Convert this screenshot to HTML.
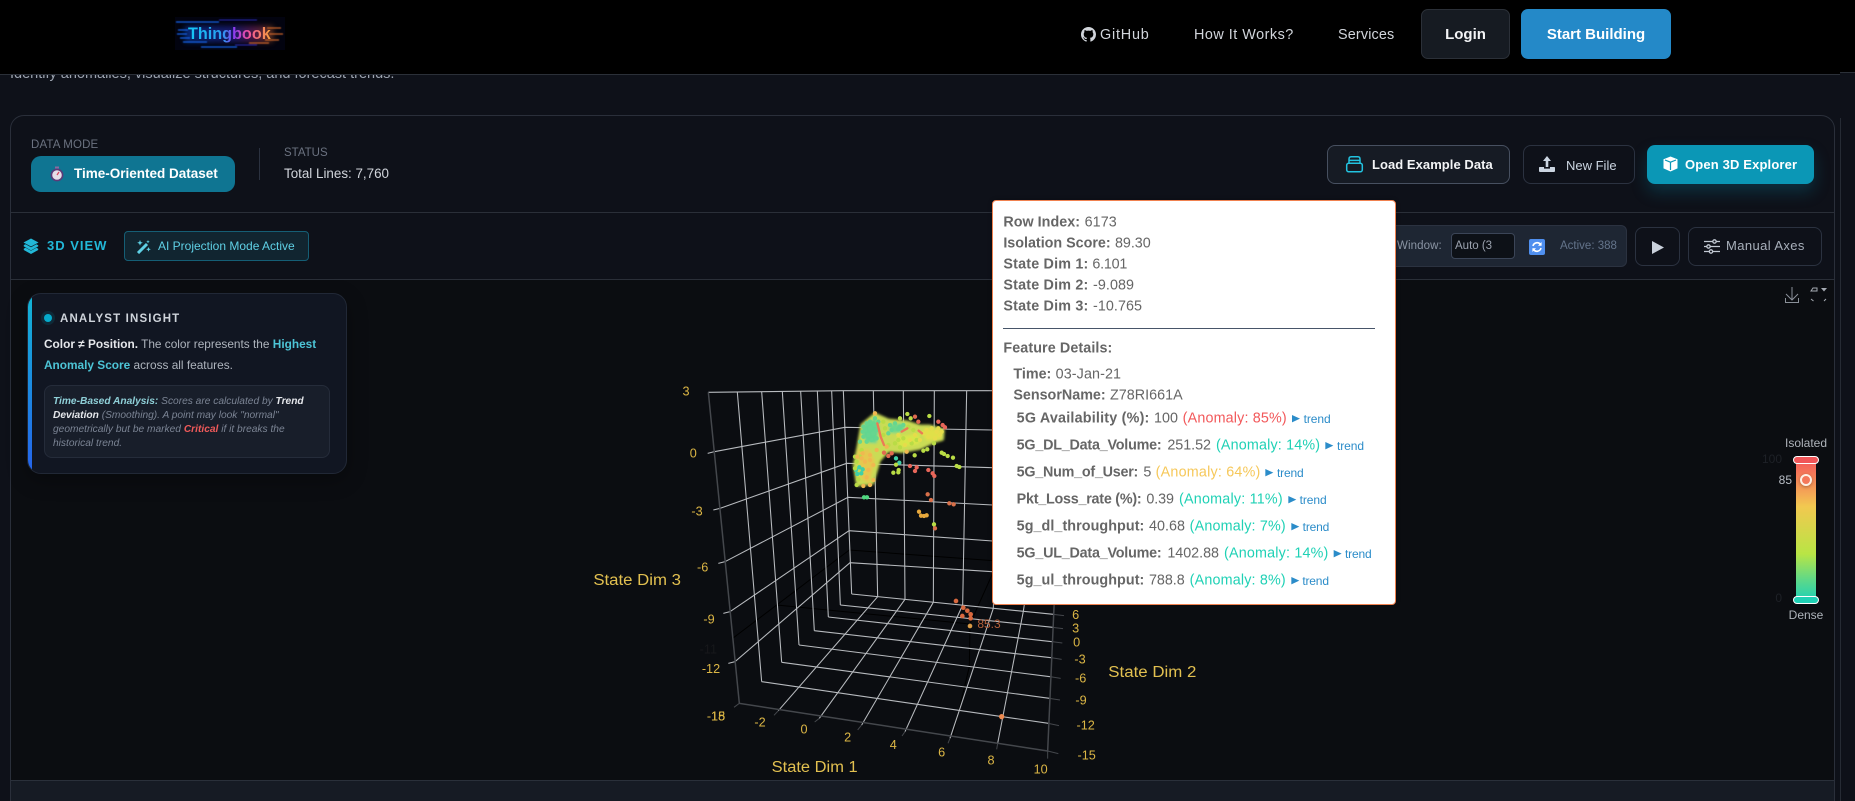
<!DOCTYPE html>
<html lang="en"><head><meta charset="utf-8"><title>Thingbook</title>
<style>
*{box-sizing:border-box;margin:0;padding:0}
html,body{width:1855px;height:801px;overflow:hidden;background:#0e1119;font-family:"Liberation Sans",sans-serif}
#w{position:relative;width:1855px;height:801px;overflow:hidden;background:#0e1119}
.a{position:absolute}
.t{position:absolute;white-space:nowrap;line-height:20px;height:20px}
b{font-weight:700}
.tip{position:absolute;left:992px;top:200px;width:404px;height:405px;background:#fff;border:1px solid #f0814f;border-radius:4px;box-shadow:0 0 4px rgba(0,0,0,.3)}
.btn{position:absolute;border-radius:8px}
</style></head><body><div id="w">

<div class="t" style="left:10px;top:64px;font-size:14.5px;color:#9ca3af">Identify anomalies, visualize structures, and forecast trends.</div>

<!-- main card -->
<div class="a" style="left:10px;top:115px;width:1825px;height:720px;background:#0e1119;border:1px solid #2a2f3a;border-radius:14px"></div>
<div class="a" style="left:11px;top:212px;width:1823px;height:1px;background:#2a2f38"></div>
<div class="a" style="left:11px;top:279px;width:1823px;height:1px;background:#2a2f38"></div>
<div class="a" style="left:11px;top:280px;width:1823px;height:500px;background:#0b0d11"></div>
<div class="a" style="left:11px;top:780px;width:1823px;height:21px;background:#161b24;border-top:1px solid #2a303a"></div>
<div class="a" style="left:1840px;top:118px;width:1px;height:683px;background:#262b34"></div>

<!-- top section -->
<div class="t" style="left:31px;top:135px;font-size:11.5px;letter-spacing:.15px;color:#6b7280">DATA MODE</div>
<div class="btn" style="left:31px;top:156px;width:204px;height:36px;background:#0f7592;border-radius:10px"></div>
<svg class="a" style="left:50px;top:166px" width="14" height="16" viewBox="0 0 14 16"><rect x="5" y="0.5" width="4" height="2" fill="#8a6aa0"/><circle cx="7" cy="9" r="5.6" fill="#e6dfe8" stroke="#5b3a78" stroke-width="1.6"/><path d="M7 9L9 6" stroke="#d8405a" stroke-width="1.2"/></svg>
<div class="t" style="left:74px;top:164px;font-size:13.5px;font-weight:700;color:#fff">Time-Oriented Dataset</div>
<div class="a" style="left:259px;top:148px;width:1px;height:32px;background:#2b3240"></div>
<div class="t" style="left:284px;top:143px;font-size:11.5px;color:#6b7280">STATUS</div>
<div class="t" style="left:284px;top:164px;font-size:13.4px;color:#d1d5db">Total Lines: 7,760</div>

<div class="btn" style="left:1327px;top:145px;width:183px;height:39px;background:#161b24;border:1px solid #475060"></div>
<svg class="a" style="left:1345px;top:155px" width="19" height="18" viewBox="0 0 19 18" fill="none" stroke="#22c3e0" stroke-width="1.5"><rect x="1.7" y="8.2" width="15.6" height="8.6" rx="2"/><path d="M4 8V4.2Q4 1.8 6.2 1.8H12.8Q15 1.8 15 4.2V8M4 5.4H15"/></svg>
<div class="t" style="left:1372px;top:155px;font-size:13px;font-weight:700;letter-spacing:.05px;color:#f3f4f6">Load Example Data</div>
<div class="btn" style="left:1523px;top:145px;width:112px;height:39px;background:#0e1119;border:1px solid #2b3240"></div>
<svg class="a" style="left:1539px;top:156px" width="16" height="16" viewBox="0 0 16 16" fill="#cbd5e1"><path d="M8 0L12 5H9.3V11H6.7V5H4Z"/><path d="M0.5 11H5V12.6H11V11H15.5Q16 11 16 12V15Q16 16 15 16H1Q0 16 0 15V12Q0 11 .5 11Z"/></svg>
<div class="t" style="left:1566px;top:156px;font-size:13px;color:#cbd5e1">New File</div>
<div class="btn" style="left:1647px;top:145px;width:167px;height:39px;background:#0b97b6;box-shadow:0 8px 16px rgba(8,145,178,.25)"></div>
<svg class="a" style="left:1663px;top:156px" width="15" height="16" viewBox="0 0 15 16"><path d="M7.5 0.5L14.5 3.2V12.4L7.5 15.5L.5 12.4V3.2Z" fill="#fff"/><path d="M2 4L7.5 6.2L13 4M7.5 6.2V14" stroke="#0b97b6" stroke-width="1.2" fill="none"/></svg>
<div class="t" style="left:1685px;top:155px;font-size:13px;font-weight:700;letter-spacing:.15px;color:#fff">Open 3D Explorer</div>

<!-- view row -->
<svg class="a" style="left:23px;top:238px" width="16" height="16" viewBox="0 0 16 16" fill="#22b8d8"><path d="M8 .5L15.5 4.5L8 8.5L.5 4.5Z"/><path d="M.8 7L2.6 6.2L8 9.2L13.4 6.2L15.2 7.2V8.4L8 12.4L.8 8.4Z"/><path d="M.8 10.6L2.6 9.8L8 12.8L13.4 9.8L15.2 10.8V12L8 16L.8 12Z"/></svg>
<div class="t" style="left:47px;top:236px;font-size:13px;font-weight:700;letter-spacing:1px;color:#22b8d8">3D VIEW</div>
<div class="a" style="left:124px;top:231px;width:185px;height:30px;background:#112530;border:1px solid #155e75;border-radius:4px"></div>
<svg class="a" style="left:136px;top:240px" width="15" height="14" viewBox="0 0 15 14" fill="#5fd0e5"><path d="M2 13L11 4" stroke="#5fd0e5" stroke-width="3"/><path d="M4 0l.8 2 2 .8-2 .8L4 5.6l-.8-2-2-.8 2-.8zM12.5 7l.7 1.6 1.6.7-1.6.7-.7 1.6-.7-1.6-1.6-.7 1.6-.7zM12 0l.5 1.2 1.2.5-1.2.5L12 3.4l-.5-1.2-1.2-.5 1.2-.5z"/></svg>
<div class="t" style="left:158px;top:236px;font-size:12px;color:#5fd0e5">AI Projection Mode Active</div>

<div class="a" style="left:1300px;top:225px;width:327px;height:42px;background:#1e2633;border:1px solid #2b3240;border-radius:6px"></div>
<div class="t" style="left:1397px;top:236px;font-size:11.5px;letter-spacing:.1px;color:#8a94a3">Window:</div>
<div class="a" style="left:1451px;top:233px;width:64px;height:26px;background:#0d1117;border:1px solid #3b4557;border-radius:4px"></div>
<div class="t" style="left:1455px;top:236px;font-size:11.5px;color:#9ca3af">Auto (3</div>
<svg class="a" style="left:1529px;top:239px" width="16" height="16" viewBox="0 0 16 16"><rect width="16" height="16" rx="2" fill="#4f8fef"/><path d="M4 7A4.2 4.2 0 0 1 11.5 5.5M12 9A4.2 4.2 0 0 1 4.5 10.5" fill="none" stroke="#fff" stroke-width="1.6"/><path d="M12.6 3V6.8H9zM3.4 13V9.2H7z" fill="#fff"/></svg>
<div class="t" style="left:1560px;top:236px;font-size:11.5px;color:#64748b">Active: 388</div>
<div class="btn" style="left:1635px;top:227px;width:45px;height:39px;background:#0e1119;border:1px solid #2b3240"></div>
<svg class="a" style="left:1652px;top:241px" width="12" height="13" viewBox="0 0 12 13"><path d="M0 0L12 6.5L0 13Z" fill="#c9d1db"/></svg>
<div class="btn" style="left:1688px;top:227px;width:134px;height:39px;background:#0e1119;border:1px solid #2b3240"></div>
<svg class="a" style="left:1704px;top:239px" width="16" height="15" viewBox="0 0 16 15" fill="#0e1119" stroke="#c2c9d3" stroke-width="1.3"><path d="M0 2.5H16M0 7.5H16M0 12.5H16"/><circle cx="10.5" cy="2.5" r="1.7"/><circle cx="4.5" cy="7.5" r="1.7"/><circle cx="7" cy="12.5" r="1.7"/></svg>
<div class="t" style="left:1726px;top:236px;font-size:13px;letter-spacing:.4px;color:#a8b0bb">Manual Axes</div>

<!-- insight card -->
<div class="a" style="left:27px;top:293px;width:320px;height:181px;background:#111622;border:1px solid #212836;border-radius:14px;overflow:hidden;box-shadow:0 6px 20px rgba(0,0,0,.3)"><div style="position:absolute;left:0;top:0;width:4px;height:100%;background:linear-gradient(#12b5d4,#2563eb)"></div></div>
<div class="a" style="left:44px;top:314px;width:8px;height:8px;border-radius:50%;background:#06aacb;box-shadow:0 0 0 3px rgba(6,170,203,.13)"></div>
<div class="t" style="left:60px;top:309px;font-size:11.5px;font-weight:700;letter-spacing:1.15px;color:#cfd4db">ANALYST INSIGHT</div>
<div class="t" style="left:44px;top:334px;font-size:11.85px;color:#aeb4bd"><b style="color:#e5e7eb">Color ≠ Position.</b> The color represents the <b style="color:#4dc4d6">Highest</b></div>
<div class="t" style="left:44px;top:355px;font-size:11.85px;color:#aeb4bd"><b style="color:#4dc4d6">Anomaly Score</b> across all features.</div>
<div class="a" style="left:44px;top:385px;width:286px;height:73px;background:#181e2a;border:1px solid #252c3a;border-radius:8px"></div>
<div class="t" style="left:53px;top:392px;font-size:10.2px;font-style:italic;color:#7b8494"><b style="color:#8fd0d8">Time-Based Analysis:</b> Scores are calculated by <b style="color:#e5e7eb">Trend</b></div>
<div class="t" style="left:53px;top:406px;font-size:10.2px;font-style:italic;color:#7b8494"><b style="color:#e5e7eb">Deviation</b> (Smoothing). A point may look "normal"</div>
<div class="t" style="left:53px;top:420px;font-size:10.2px;font-style:italic;color:#7b8494">geometrically but be marked <b style="color:#ef5a5a">Critical</b> if it breaks the</div>
<div class="t" style="left:53px;top:434px;font-size:10.2px;font-style:italic;color:#7b8494">historical trend.</div>

<!-- chart -->
<svg class="a" style="left:0;top:0" width="1855" height="801" viewBox="0 0 1855 801">
<defs><filter id="soft" x="-20%" y="-20%" width="140%" height="140%"><feGaussianBlur stdDeviation="4"/></filter><filter id="dot"><feGaussianBlur stdDeviation="1.2"/></filter></defs>
<g transform="translate(580 370) scale(.33333)" fill="none" font-family="Liberation Sans, sans-serif">
<g stroke="#000" stroke-width="3"><path d="M458 805L808 540L1238 572M590 705L1170 762L1168 890L1118 1100M1238 610L1170 762"/></g>
<g stroke="#b8bbbf" stroke-width="3.2">
<path d="M385 67L790 62L1238 62"/>
<path d="M472 67L545 935M545 65L605 877M607 65L657 825M662 64L703 782M712 63L745 741M755 63L781 705M790 62L815 672"/>
<path d="M383 250L403 245L795 172L1238 180M400 420L420 415L800 280L1238 293M415 580L435 575L804 382L1238 405M430 730L450 725L807 482L1238 513M445 880L465 875L810 578L1238 605"/>
<path d="M880 62L893 680M970 62L975 688M1063 62L1060 697M1160 62L1148 705M1262 62L1240 715M1335 690L1330 724"/>
<path d="M815 672L1420 733M781 705L1418 772M745 741L1416 815M703 782L1413 863M657 825L1410 920M605 877L1408 985M545 935L1405 1060"/>
<path d="M595 1022L893 680M718 1045L975 688M845 1065L1060 697M975 1085L1148 705M1110 1105L1240 715M1253 1120L1330 724"/>
</g>
<g stroke="#44474c" stroke-width="4.5"><path d="M385 67L478 1000L1403 1143L1423 690"/></g>
<g stroke="#44474c" stroke-width="3"><path d="M478 1000L462 1012M595 1022L582 1036M718 1045L704 1056M845 1065L833 1080M975 1085L966 1098M1110 1105L1104 1120M1253 1120L1250 1138M1403 1143L1403 1166M1403 1143L1435 1151M1405 1060L1437 1067M1408 985L1440 990M1410 920L1442 925M1413 863L1445 868M1416 815L1447 819M1418 772L1449 776M1420 733L1452 737"/></g>
<g font-size="38" fill="#dcb645" text-anchor="middle" dominant-baseline="central">
<text x="318" y="65">3</text><text x="340" y="250">0</text><text x="351" y="425">-3</text><text x="368" y="592">-6</text><text x="387" y="748">-9</text><text x="385" y="838" fill="#17181b">-11</text><text x="393" y="897">-12</text><text x="408" y="1040">-15</text><text x="408" y="1040">-18</text>
<text x="540" y="1058">-2</text><text x="672" y="1078">0</text><text x="803" y="1102">2</text><text x="940" y="1125">4</text><text x="1085" y="1148">6</text><text x="1233" y="1172">8</text><text x="1382" y="1199">10</text>
<text x="1487" y="735">6</text><text x="1487" y="775">3</text><text x="1490" y="818">0</text><text x="1500" y="868">-3</text><text x="1502" y="925">-6</text><text x="1503" y="991">-9</text><text x="1517" y="1067">-12</text><text x="1520" y="1157">-15</text>
</g>
<g font-size="46" fill="#e2c050" dominant-baseline="central">
<text x="40" y="632" textLength="263" lengthAdjust="spacingAndGlyphs">State Dim 3</text>
<text x="575" y="1192" textLength="258" lengthAdjust="spacingAndGlyphs">State Dim 1</text>
<text x="1585" y="907" textLength="264" lengthAdjust="spacingAndGlyphs">State Dim 2</text>
</g>
<text x="1192" y="762" font-size="36" fill="#b5603a" dominant-baseline="central">85.3</text>
<g stroke-linecap="round" stroke-width="14">
<path stroke="#d9693f" d="M1128 693h0M1150 713h0M1162 722h0M1172 733h0M1147 738h0M1172 745h0"/>
<path stroke="#d99a45" d="M1170 768h0"/>
<path stroke="#ee8a50" stroke-width="16" d="M1265 1040h0"/>
</g>
</g>
<g transform="translate(820 390) scale(.33333)" stroke-linecap="round" stroke-linejoin="round" fill="none">
<g filter="url(#soft)">
<path fill="#c9dc55" stroke="#c9dc55" stroke-width="8" d="M125 105L165 72L205 90L260 95L300 108L330 108L370 120L368 148L340 156L300 175L245 185L205 182L178 212L158 280L112 285L103 225L114 170Z"/>
<path fill="#62d690" d="M130 105L165 85L178 110L170 160L140 158L127 135Z"/>
<path fill="#6cd88c" d="M208 102L252 100L255 122L225 130L208 128Z"/>
<path fill="#e0e04a" d="M312 115L362 120L364 148L320 152L308 135Z"/>
<path fill="#d8e64a" d="M228 142L298 130L298 162L240 172Z"/>
<path fill="#e6c850" d="M112 178L148 178L165 212L148 280L125 268Z"/>
</g>
<g stroke-width="13">
<path stroke="#66d690" d="M130 110h0M140 100h0M150 95h0M165 85h0M128 125h0M135 120h0M150 115h0M165 105h0M175 95h0M130 140h0M145 135h0M160 130h0M170 120h0M140 155h0M155 150h0M170 145h0M120 155h0M210 105h0M225 100h0M240 110h0M215 120h0M235 118h0M250 105h0M205 130h0"/>
<path stroke="#40d0a8" d="M108 240h0M118 232h0M128 238h0M112 252h0M124 250h0M228 205h0M238 218h0"/>
<path stroke="#b9dc45" d="M105 200h0M110 215h0M105 235h0M120 200h0M125 180h0M115 268h0M110 285h0M190 95h0M195 115h0M190 135h0M265 110h0M280 120h0M250 145h0M235 150h0M225 160h0M275 160h0M290 150h0M205 165h0M240 172h0M328 78h0M262 72h0M310 182h0M322 178h0M342 160h0M365 188h0M372 192h0M383 198h0M399 203h0M410 228h0M418 231h0M284 196h0M228 224h0M236 240h0M220 248h0M235 247h0M342 403h0M240 85h0M272 85h0"/>
<path stroke="#e6dc4a" d="M320 120h0M335 115h0M350 125h0M360 135h0M345 145h0M325 140h0M310 130h0M300 150h0M285 135h0M270 150h0M255 165h0M235 135h0M365 125h0M355 115h0"/>
<path stroke="#f0b850" d="M165 70h0M130 288h0M150 285h0M160 270h0M140 262h0M145 240h0M160 225h0M112 200h0M128 190h0M150 195h0M170 180h0M200 170h0M260 185h0M135 215h0M150 210h0M125 205h0"/>
<path stroke="#ec7a55" stroke-width="7" d="M172 100L182 140L192 165M245 125L262 115M296 122L306 130"/>
<path stroke="#e8665a" d="M355 95h0M368 105h0M375 112h0M270 228h0M290 232h0M285 243h0M325 240h0M338 250h0M343 258h0"/>
<path stroke="#e06a50" d="M192 188h0M205 198h0M215 190h0M285 80h0M295 95h0"/>
<path stroke="#d8704a" d="M323 313h0M333 330h0M388 340h0M401 343h0M345 415h0"/>
<path stroke="#50d880" d="M132 322h0M141 322h0"/>
<path stroke="#e8a83c" d="M297 365h0M303 377h0M312 378h0M320 376h0"/>
</g>
</g>
</svg>

<svg class="a" style="left:1784px;top:286px" width="45" height="18" viewBox="0 0 45 18" fill="none" stroke="#8a9099" stroke-width="1"><path d="M8 1V14M2 8L8 14L14 8M1.5 12V16.5H14.5V12"/><path d="M27 5L29 2H33V5ZM27 13L29.5 15M42 13L40 15" stroke="#a5aab2"/><path d="M37 2H43L40 5.5Z" fill="#a5aab2" stroke="none"/></svg>

<!-- legend -->
<div class="t" style="left:1766px;top:433px;width:80px;text-align:center;font-size:12px;color:#aeb3ba">Isolated</div>
<div class="t" style="left:1742px;top:449px;width:40px;text-align:right;font-size:12px;color:#1e2127">100</div>
<div class="t" style="left:1762px;top:470px;width:30px;text-align:right;font-size:12px;color:#b9bec6">85</div>
<div class="t" style="left:1752px;top:588px;width:30px;text-align:right;font-size:12px;color:#1e2127">0</div>
<div class="a" style="left:1796px;top:460px;width:20px;height:140px;background:linear-gradient(#f4585a 0%,#f4a856 24%,#f2c850 33%,#b9e545 67%,#5cd88a 86%,#1fd1b5 100%)"></div>
<div class="a" style="left:1793px;top:456px;width:26px;height:8px;background:#f05558;border:1px solid #fff;border-radius:4px"></div>
<div class="a" style="left:1793px;top:596px;width:26px;height:8px;background:#1fd1b5;border:1px solid #fff;border-radius:4px"></div>
<div class="a" style="left:1800px;top:474px;width:12px;height:12px;border:2px solid #fdf0e4;border-radius:50%;background:#f4785a;box-shadow:0 1px 3px rgba(0,0,0,.3)"></div>
<div class="t" style="left:1766px;top:605px;width:80px;text-align:center;font-size:12px;color:#aeb3ba">Dense</div>

<!-- tooltip -->
<div class="tip"></div>
<svg class="a" style="left:985px;top:200px" width="420" height="410" viewBox="0 0 1260 1230" font-family="Liberation Sans, sans-serif" font-size="43" fill="#666">
<g font-weight="700">
<text x="55" y="80" textLength="230">Row Index:</text>
<text x="55" y="143" textLength="322">Isolation Score:</text>
<text x="55" y="205" textLength="255">State Dim 1:</text>
<text x="55" y="269" textLength="255">State Dim 2:</text>
<text x="55" y="332" textLength="255">State Dim 3:</text>
<text x="55" y="458" textLength="327">Feature Details:</text>
<text x="85" y="536" textLength="114">Time:</text>
<text x="85" y="599" textLength="277">SensorName:</text>
<text x="95" y="667" textLength="398">5G Availability (%):</text>
<text x="95" y="748" textLength="435">5G_DL_Data_Volume:</text>
<text x="95" y="829" textLength="365">5G_Num_of_User:</text>
<text x="95" y="910" textLength="375">Pkt_Loss_rate (%):</text>
<text x="95" y="991" textLength="383">5g_dl_throughput:</text>
<text x="95" y="1072" textLength="435">5G_UL_Data_Volume:</text>
<text x="95" y="1153" textLength="383">5g_ul_throughput:</text>
</g>
<text x="299" y="80" textLength="96">6173</text>
<text x="390" y="143" textLength="107">89.30</text>
<text x="322" y="205" textLength="105">6.101</text>
<text x="324" y="269" textLength="123">-9.089</text>
<text x="324" y="332" textLength="147">-10.765</text>
<text x="212" y="536" textLength="196">03-Jan-21</text>
<text x="375" y="599" textLength="218">Z78RI661A</text>
<text x="507" y="667" textLength="72">100</text>
<text x="547" y="748" textLength="131">251.52</text>
<text x="475" y="829" textLength="22">5</text>
<text x="484" y="910" textLength="83">0.39</text>
<text x="492" y="991" textLength="108">40.68</text>
<text x="547" y="1072" textLength="155">1402.88</text>
<text x="492" y="1153" textLength="107">788.8</text>
<text x="593" y="667" textLength="312" fill="#f2585a">(Anomaly: 85%)</text>
<text x="693" y="748" textLength="312" fill="#1fd1b5">(Anomaly: 14%)</text>
<text x="512" y="829" textLength="314" fill="#f6c85a">(Anomaly: 64%)</text>
<text x="582" y="910" textLength="311" fill="#1fd1b5">(Anomaly: 11%)</text>
<text x="614" y="991" textLength="288" fill="#1fd1b5">(Anomaly: 7%)</text>
<text x="717" y="1072" textLength="313" fill="#1fd1b5">(Anomaly: 14%)</text>
<text x="614" y="1153" textLength="288" fill="#1fd1b5">(Anomaly: 8%)</text>
<g fill="#2b8cc9" font-size="36">
<path d="M921 645l24 11-24 11zM1021 726l24 11-24 11zM841 807l24 11-24 11zM910 888l24 11-24 11zM919 969l24 11-24 11zM1046 1050l24 11-24 11zM919 1131l24 11-24 11z"/>
<text x="956" y="669" textLength="81">trend</text>
<text x="1056" y="750" textLength="81">trend</text>
<text x="876" y="831" textLength="80">trend</text>
<text x="944" y="912" textLength="81">trend</text>
<text x="953" y="993" textLength="80">trend</text>
<text x="1080" y="1074" textLength="80">trend</text>
<text x="952" y="1155" textLength="80">trend</text>
</g>
<rect x="54" y="384" width="1116" height="3" fill="#475569"/>
</svg>

<!-- header -->
<div class="a" style="left:0;top:0;width:1855px;height:72px;background:#000"></div>
<div class="a" style="left:0;top:72px;width:1840px;height:2px;background:#000"></div>
<div class="a" style="left:0;top:74px;width:1840px;height:1px;background:#2b3038"></div>
<div class="a" style="left:1840px;top:72px;width:15px;height:1px;background:#2b3038"></div>

<svg class="a" style="left:175px;top:17px" width="110" height="33" viewBox="0 0 110 33">
<defs><linearGradient id="lg" x1="0" x2="1"><stop offset="0" stop-color="#0a4ad0"/><stop offset=".55" stop-color="#2a2ab0"/><stop offset=".78" stop-color="#8a2a70"/><stop offset="1" stop-color="#b05a20"/></linearGradient><filter id="bl" x="-5%" y="-20%" width="110%" height="140%"><feGaussianBlur stdDeviation=".6"/></filter><filter id="bl2" x="-10%" y="-40%" width="120%" height="180%"><feGaussianBlur stdDeviation="3"/></filter></defs>
<rect width="110" height="33" fill="#02030f"/>
<rect x="10" y="9" width="88" height="16" fill="url(#lg)" opacity=".55" filter="url(#bl2)"/>
<g filter="url(#bl)"><path stroke="#1464e6" stroke-width="1.3" d="M1 5H44M3 13H13M2 17H12M5 21H15M8 25H32M26 30H62"/><path stroke="#2a2ab0" stroke-width="1" d="M44 3H82M60 28H82"/><path stroke="#c8642a" stroke-width="1.2" d="M92 11H106M94 17H108M90 23H104M74 26H94"/></g>
</svg>
<div class="t" style="left:188px;top:24px;font-size:16.2px;font-weight:700;background:linear-gradient(90deg,#14c8f5 0%,#2a9cf0 42%,#8a3cf0 55%,#ef4fa0 72%,#f9a03a 100%);-webkit-background-clip:text;background-clip:text;color:transparent">Thingbook</div>

<svg class="a" style="left:1081px;top:27px" width="15" height="15" viewBox="0 0 16 16"><path fill="#d1d5db" d="M8 0C3.58 0 0 3.58 0 8c0 3.54 2.29 6.53 5.47 7.59.4.07.55-.17.55-.38 0-.19-.01-.82-.01-1.49-2.01.37-2.53-.49-2.69-.94-.09-.23-.48-.94-.82-1.13-.28-.15-.68-.52-.01-.53.63-.01 1.08.58 1.23.82.72 1.21 1.87.87 2.33.66.07-.52.28-.87.51-1.07-1.78-.2-3.64-.89-3.64-3.95 0-.87.31-1.59.82-2.15-.08-.2-.36-1.02.08-2.12 0 0 .67-.21 2.2.82.64-.18 1.32-.27 2-.27s1.36.09 2 .27c1.53-1.04 2.2-.82 2.2-.82.44 1.1.16 1.92.08 2.12.51.56.82 1.27.82 2.15 0 3.07-1.87 3.75-3.65 3.95.29.25.54.73.54 1.48 0 1.07-.01 1.93-.01 2.2 0 .21.15.46.55.38A8.01 8.01 0 0 0 16 8c0-4.42-3.58-8-8-8z"/></svg>
<div class="t" style="left:1100px;top:25px;font-size:14.4px;letter-spacing:.8px;color:#d1d5db">GitHub</div>
<div class="t" style="left:1194px;top:25px;font-size:14.4px;letter-spacing:.5px;color:#d1d5db">How It Works?</div>
<div class="t" style="left:1338px;top:25px;font-size:14.4px;letter-spacing:.15px;color:#d1d5db">Services</div>
<div class="a" style="left:1421px;top:9px;width:89px;height:50px;background:#161b22;border:1px solid #2b3038;border-radius:7px"></div>
<div class="t" style="left:1421px;top:25px;width:89px;text-align:center;font-size:15px;font-weight:700;color:#f3f4f6">Login</div>
<div class="a" style="left:1521px;top:9px;width:150px;height:50px;background:#2489c8;border-radius:7px"></div>
<div class="t" style="left:1521px;top:25px;width:150px;text-align:center;font-size:15px;font-weight:700;color:#fff">Start Building</div>
</div></body></html>
